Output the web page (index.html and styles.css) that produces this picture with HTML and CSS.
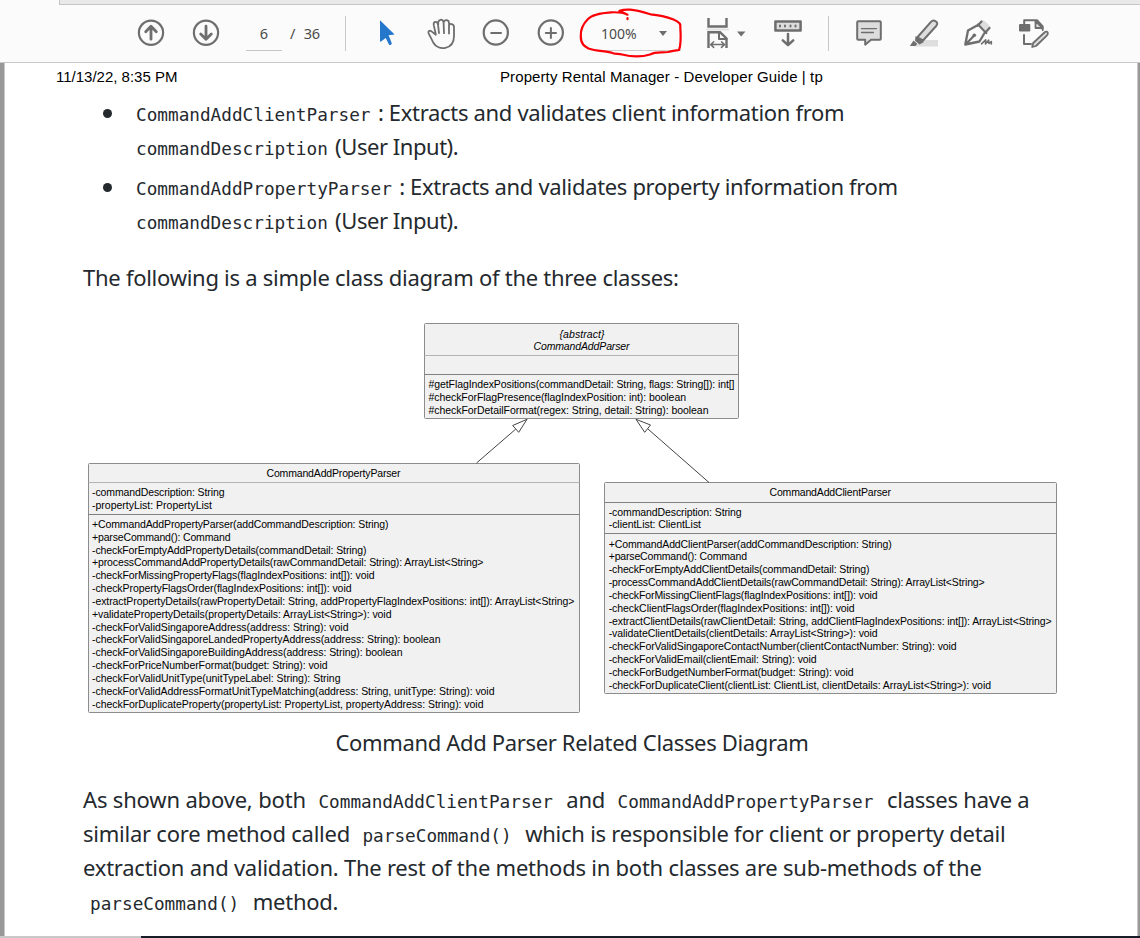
FILE: index.html
```html
<!DOCTYPE html>
<html lang="en">
<head>
<meta charset="utf-8">
<title>Property Rental Manager - Developer Guide</title>
<link rel="stylesheet" href="styles.css">
</head>
<body>
<header class="toolbar">
  <div class="tabstrip"></div>
  <div class="tools">
    <div class="tool w54"><svg class="icon" viewBox="131 13 40 40"><circle cx="151" cy="32.7" r="12.1"/><path d="M151 39.2V26.5M145.7 31.7l5.3-5.4 5.3 5.4" stroke-width="2.8"/></svg></div>
    <div class="tool w56"><svg class="icon" viewBox="186 13 40 40"><circle cx="206" cy="32.7" r="12.1"/><path d="M206 26.2v12.7M200.7 33.9l5.3 5.4 5.3-5.4" stroke-width="2.8"/></svg></div>
    <div class="page-input">6</div>
    <div class="page-total"><span>/</span><span>36</span></div>
    <div class="sep"></div>
    <div class="tool w54 after-sep"><svg class="icon" viewBox="367 13 40 40"><path class="cursor" d="M380 20.2L394.6 34.5L388.6 35.2L391.8 43.2Q391.5 45.3 389.2 45L385.7 38L381 41.5Q380 42 380 41Z"/></svg></div>
    <div class="tool w54"><svg class="icon" viewBox="421 13 40 40"><path d="M435.8 34.2L433.8 25.4C433 21.3 437 20.6 438 24.4L439 33.2M438.3 24.6C437.4 18.6 443.2 18.4 443.6 22.5L444 33.2M443.7 22.5C443.8 19.2 449 19.5 449 23V33.5M449 25.5C449.4 22.8 454 23.8 454 27V36C454 50 438 51.500 433.2 42.500C431.400 38.500 430 36 428.700 33.600C427.500 31.300 429.800 30 431.500 31.400L435.800 34.800" stroke-width="1.8"/></svg></div>
    <div class="tool w56"><svg class="icon" viewBox="476 13 40 40"><circle cx="495.8" cy="32.5" r="12.1"/><path d="M491.200 33h9.800" stroke-width="2"/></svg></div>
    <div class="tool w54"><svg class="icon" viewBox="531 13 40 40"><circle cx="550.800" cy="32.500" r="12.100"/><path d="M545.800 33h10.200M550.900 27.900v10.200" stroke-width="2"/></svg></div>
    <div class="zoom-box">
      <span class="zoom-value">100%</span><span class="caret"></span>
      <svg class="mark" viewBox="578 8 110 52"><path d="M627 14.600C623.500 12.500 619 12 611 12.300C601 13 592 14.500 588 19C582 25 580.500 30 580.800 36C580.600 44 584.500 46.500 588.500 48.500C596 51 604 51 611.500 52.600C614 54.500 618 53.500 622 54.500C634 57.500 642 57 650 54.500C656 51.500 661 53 668 52C674 50.500 677 50.500 679 50C681 45 681 37 680.300 27C681 24.500 679.500 22 673.500 19.500C666 16.500 660 15 650.500 14.300C644 12.200 638 10 630 9.600C625 9.300 622 10 619.500 10.800L627.500 14.700M627.500 18.200v1"/></svg>
    </div>
    <div class="tool w72"><svg class="icon wide" viewBox="704 13 48 40"><path d="M708.500 18V26.500H726.500V18" class="sharp" stroke-width="2.400"/><path d="M707 29.500h21" stroke="#e2e2e2" stroke-width="2"/><path d="M708.500 48V32.200H720L726.500 38.500V48" class="sharp" stroke-width="2.400"/><path d="M719 32.500v6.500h7.500" stroke-width="2"/><path d="M711 44.600h13.500M713.700 41.800l-3 2.800 3 2.800M721.500 41.800l3 2.800-3 2.800" stroke-width="1.500"/><path class="solid" d="M737 31.500h8.400l-4.200 5z"/></svg></div>
    <div class="tool w56"><svg class="icon" viewBox="768 13 40 40"><rect x="775.400" y="21.400" width="25.200" height="9.200" fill="#ddd" stroke-width="2.500"/><path d="M780 25.500v1M785 25.500v1M790.500 25.500v1M795.500 25.500v1" stroke-width="2"/><path d="M788 34v10M782.800 40.300l5.200 4.900 5.200-4.900" stroke-width="2.500"/></svg></div>
    <div class="sep second"></div>
    <div class="tool w54 near-sep"><svg class="icon" viewBox="848 13 40 40"><path d="M858.200 21.300H879.800Q880.800 21.300 880.800 22.300V38.700Q880.800 39.700 879.800 39.700H871L865.200 44.700V39.700H858.200Q857.200 39.700 857.200 38.700V22.300Q857.200 21.300 858.200 21.300Z" fill="#ddd" stroke-width="2"/><path d="M861.500 28.600h15M861.500 32.500h12" stroke-width="1.300"/></svg></div>
    <div class="tool w58"><svg class="icon" viewBox="904 13 40 40"><path d="M914 46.500L923 40H938V46.500Z" fill="#dedede" stroke="none"/><path d="M917.200 37.500L930.700 22.200Q933 19.500 935.700 21.300Q938.500 23.300 936.200 26L923 40.500Z" fill="#ddd" stroke-width="2"/><path class="solid" d="M915.500 36L924 42L919.500 44.500L915 40.800Z"/><path class="solid" d="M913.500 40.500L917.300 43.800L915.500 46H909.800Z"/></svg></div>
    <div class="tool w52"><svg class="icon" viewBox="959 13 40 40"><path d="M979.500 24.500L983.500 20L990.500 26.500L985.500 30Z" fill="#ddd" stroke="none"/><path d="M978 24.500L986.300 33M977 25.500L968 30.500L965.300 44.500L979.500 41.500L984.800 32.500M966 44L973.500 36.200M981.500 21.500L977.500 25.700M989.500 28L985.300 32.500" stroke-width="2.300"/><circle class="solid" cx="974.300" cy="35.300" r="1.800"/><path d="M981.500 43.800L985.700 39.800L985.500 44L988.600 40.200L989 43.500L991.300 41.500V44" stroke-width="1.600"/></svg></div>
    <div class="tool w58"><svg class="icon" viewBox="1014 13 40 40"><path d="M1024.200 24V20.300H1037L1042.700 26.500V30M1024 35V43.900H1031" stroke-width="2"/><path d="M1035.500 21v7h7z" fill="#ddd" stroke-width="1.800"/><rect class="solid" x="1019" y="24" width="11.300" height="7.500" rx="1"/><path d="M1033.200 43L1045 32Q1047 31 1047.800 32.700Q1048.300 34 1046.500 35.800L1036 46L1032.200 47Z" fill="#ddd" stroke-width="1.800"/></svg></div>
  </div>
</header>
<main class="viewer">
  <article class="sheet">
    <div class="running-head"><span class="stamp">11/13/22, 8:35 PM</span><span class="doc-title">Property Rental Manager - Developer Guide | tp</span></div>
    <ul class="list">
      <li><span class="line"><code>CommandAddClientParser</code><span class="after-code"> : Extracts and validates client information from</span></span><span class="line"><code>commandDescription</code><span class="after-code ui"> (User Input).</span></span></li>
      <li><span class="line"><code>CommandAddPropertyParser</code><span class="after-code long"> : Extracts and validates property information from</span></span><span class="line"><code>commandDescription</code><span class="after-code ui"> (User Input).</span></span></li>
    </ul>
    <p class="lead">The following is a simple class diagram of the three classes:</p>
    <svg class="diagram" viewBox="83 318 980 400">
      <g class="box"><rect x="424.500" y="323.500" width="314" height="95" rx="1"/><path class="pale" d="M424.500 355.500h314"/><path d="M424.500 374.500h314"/></g>
      <g class="box"><rect x="88.500" y="463.500" width="491" height="249" rx="1"/><path class="pale" d="M88.500 482.500h491"/><path d="M88.500 514.500h491"/></g>
      <g class="box"><rect x="604.500" y="482.500" width="452" height="211" rx="1"/><path d="M604.500 502.500h452M604.500 533.500h452"/></g>
      <g class="arrow"><path d="M476.500 463L515.500 429.300M709 482.500L647.600 428.700"/><path d="M527 419.300L512.700 425.500L518.700 432.300Z"/><path d="M636 419.300L650.500 425L644.700 432.300Z"/></g>
      <g class="italic">
        <text x="559.500" y="337.500" textLength="45">{abstract}</text>
        <text x="533.500" y="350" textLength="96">CommandAddParser</text>
      </g>
      <text x="428.500" y="388" textLength="306">#getFlagIndexPositions(commandDetail: String, flags: String[]): int[]</text>
      <text x="428.500" y="401" textLength="257.500">#checkForFlagPresence(flagIndexPosition: int): boolean</text>
      <text x="428.500" y="414" textLength="280">#checkForDetailFormat(regex: String, detail: String): boolean</text>

      <text x="266.500" y="477.300" textLength="134">CommandAddPropertyParser</text>
      <text x="92" y="496.300" textLength="132.500">-commandDescription: String</text>
      <text x="92" y="509.200" textLength="120">-propertyList: PropertyList</text>
      <text x="92" y="527.800" textLength="296.500">+CommandAddPropertyParser(addCommandDescription: String)</text>
      <text x="92" y="540.700" textLength="138.500">+parseCommand(): Command</text>
      <text x="92" y="553.500" textLength="274.500">-checkForEmptyAddPropertyDetails(commandDetail: String)</text>
      <text x="92" y="566.300" textLength="391.500">+processCommandAddPropertyDetails(rawCommandDetail: String): ArrayList&lt;String&gt;</text>
      <text x="92" y="579.200" textLength="282.500">-checkForMissingPropertyFlags(flagIndexPositions: int[]): void</text>
      <text x="92" y="592" textLength="259.500">-checkPropertyFlagsOrder(flagIndexPositions: int[]): void</text>
      <text x="92" y="604.900" textLength="482.500">-extractPropertyDetails(rawPropertyDetail: String, addPropertyFlagIndexPositions: int[]): ArrayList&lt;String&gt;</text>
      <text x="92" y="617.700" textLength="299.500">+validatePropertyDetails(propertyDetails: ArrayList&lt;String&gt;): void</text>
      <text x="92" y="630.500" textLength="256.500">-checkForValidSingaporeAddress(address: String): void</text>
      <text x="92" y="643.400" textLength="348.500">-checkForValidSingaporeLandedPropertyAddress(address: String): boolean</text>
      <text x="92" y="656.200" textLength="310.500">-checkForValidSingaporeBuildingAddress(address: String): boolean</text>
      <text x="92" y="669.100" textLength="235.500">-checkForPriceNumberFormat(budget: String): void</text>
      <text x="92" y="681.900" textLength="248.500">-checkForValidUnitType(unitTypeLabel: String): String</text>
      <text x="92" y="694.700" textLength="402.500">-checkForValidAddressFormatUnitTypeMatching(address: String, unitType: String): void</text>
      <text x="92" y="707.600" textLength="391.500">-checkForDuplicateProperty(propertyList: PropertyList, propertyAddress: String): void</text>

      <text x="769.500" y="496.300" textLength="121.500">CommandAddClientParser</text>
      <text x="608.700" y="515.800" textLength="133">-commandDescription: String</text>
      <text x="608.700" y="528.300" textLength="92.300">-clientList: ClientList</text>
      <text x="608.700" y="547.500" textLength="283">+CommandAddClientParser(addCommandDescription: String)</text>
      <text x="608.700" y="560.300" textLength="138.300">+parseCommand(): Command</text>
      <text x="608.700" y="573.200" textLength="260.800">-checkForEmptyAddClientDetails(commandDetail: String)</text>
      <text x="608.700" y="586" textLength="376">-processCommandAddClientDetails(rawCommandDetail: String): ArrayList&lt;String&gt;</text>
      <text x="608.700" y="598.800" textLength="269">-checkForMissingClientFlags(flagIndexPositions: int[]): void</text>
      <text x="608.700" y="611.700" textLength="246">-checkClientFlagsOrder(flagIndexPositions: int[]): void</text>
      <text x="608.700" y="624.500" textLength="443">-extractClientDetails(rawClientDetail: String, addClientFlagIndexPositions: int[]): ArrayList&lt;String&gt;</text>
      <text x="608.700" y="637.400" textLength="269">-validateClientDetails(clientDetails: ArrayList&lt;String&gt;): void</text>
      <text x="608.700" y="650.200" textLength="348">-checkForValidSingaporeContactNumber(clientContactNumber: String): void</text>
      <text x="608.700" y="663" textLength="208">-checkForValidEmail(clientEmail: String): void</text>
      <text x="608.700" y="675.900" textLength="245">-checkForBudgetNumberFormat(budget: String): void</text>
      <text x="608.700" y="688.700" textLength="382.300">-checkForDuplicateClient(clientList: ClientList, clientDetails: ArrayList&lt;String&gt;): void</text>
    </svg>
    <p class="caption">Command Add Parser Related Classes Diagram</p>
    <p class="body-text"><span class="line"><span class="opening">As shown above, both </span><code class="pad">CommandAddClientParser</code> and <code class="pad">CommandAddPropertyParser</code> classes have a</span><span class="line">similar core method called <code class="pad">parseCommand()</code> which is responsible for client or property detail</span><span class="line">extraction and validation. The rest of the methods in both classes are sub-methods of the</span><span class="line"><code class="pad">parseCommand()</code> method.</span></p>
  </article>
</main>
<footer class="taskbar"></footer>
</body>
</html>
```

FILE: styles.css
```css
* { box-sizing: border-box; }
body { margin: 0; height: 938px; overflow: hidden; display: flex; flex-direction: column; background: #fff; color: #24292e; font-family: "Noto Sans", "Open Sans", sans-serif; }

.toolbar { height: 63px; flex: none; background: #fbfbfb; border-bottom: 1px solid #c8c8c8; }
.tabstrip { height: 5px; margin-left: 59px; background: #e9e9e9; border-left: 1px solid #c6c6c6; border-bottom: 1px solid #c6c6c6; }
.tools { display: flex; height: 40px; margin-top: 8px; padding-left: 124px; font-size: 14.5px; color: #4b4b4b; }
.tool { display: flex; justify-content: center; flex: none; }
.w52 { width: 52px; }
.w54 { width: 54px; }
.w56 { width: 56px; }
.w58 { width: 58px; }
.w72 { width: 72px; }
.icon { width: 40px; height: 40px; fill: none; stroke: #6e6e6e; stroke-width: 2.2; stroke-linecap: round; stroke-linejoin: round; }
.icon.wide { width: 48px; flex: none; margin-left: 8px; }
.icon .sharp { stroke-linecap: butt; stroke-linejoin: miter; }
.icon .solid { fill: #6e6e6e; stroke: none; }
.icon .cursor { fill: #2477cb; stroke: none; }
.page-input { width: 36px; height: 38px; margin-left: 12px; border-bottom: 1px solid #c6c6c6; text-align: center; line-height: 41px; }
.page-total { width: 47px; flex: none; margin-left: 8px; display: flex; gap: 8.5px; line-height: 41px; letter-spacing: -0.2px; }
.sep { width: 1px; height: 35px; margin-top: 3px; margin-left: 8px; background: #c8c8c8; flex: none; }
.after-sep { margin-left: 14px; }
.sep.second { margin-left: 12px; }
.near-sep { margin-left: 12px; }
.zoom-box { position: relative; width: 110px; flex: none; display: flex; align-items: flex-start; padding-left: 23px; line-height: 41px; font-size: 14px; }
.zoom-value { width: 58px; height: 38px; flex: none; border-bottom: 1px solid #ccc; }
.caret { width: 22px; height: 38px; border-bottom: 1px solid #ccc; }
.caret::before { content: ""; display: block; margin-top: 18px; width: 0; border: 4.5px solid transparent; border-top: 5px solid #6e6e6e; border-bottom: 0; }
.mark { position: absolute; left: 0; top: -5px; width: 110px; height: 52px; fill: none; stroke: #fb0007; stroke-width: 2.2; stroke-linecap: round; stroke-linejoin: round; }

.viewer { flex: 1; min-height: 0; overflow: hidden; background: #999; padding-left: 4px; padding-right: 2px; }
.sheet { height: 100%; background: #fff; border-left: 1px solid #c8c8c8; border-right: 1px solid #c8c8c8; padding-left: 78px; }
.running-head { display: flex; margin-left: -27px; height: 32px; padding-top: 5px; font: 15px/18px "Liberation Sans", sans-serif; color: #000; }
.stamp { width: 444px; }
.doc-title { white-space: nowrap; letter-spacing: 0.1px; }
.list { list-style: none; margin: 0; padding: 0; }
.list li { position: relative; padding-left: 53px; margin-bottom: 6px; }
.list li::before { content: ""; position: absolute; left: 20px; top: 14px; width: 9px; height: 9px; border-radius: 50%; background: #24292e; }
.line { display: block; height: 34px; }
.line, .lead, .caption { font-size: 22px; line-height: 34px; white-space: pre; letter-spacing: -0.3px; }
.after-code { margin-left: 2px; letter-spacing: -0.32px; }
.after-code.long { letter-spacing: -0.34px; }
.after-code.ui { letter-spacing: -0.46px; }
code { font: 17.72px/20px "DejaVu Sans Mono", "Liberation Mono", monospace; letter-spacing: 0; }
.pad { padding: 0 8px 0 7px; }
.lead { margin: 23px 0 24px; letter-spacing: -0.27px; }
.diagram { display: block; width: 980px; height: 400px; font-family: "Liberation Sans", sans-serif; font-size: 10.5px; fill: #000; }
.diagram .italic { font-style: italic; }
.box rect { fill: #f1f1f1; stroke: #8c8c8c; }
.box path { stroke: #808080; fill: none; }
.box .pale { stroke: #b4b4b4; }
.arrow path { fill: #fff; stroke: #444; stroke-width: 1; }
.caption { margin: 7px 0 23px; width: 978px; text-align: center; letter-spacing: -0.34px; }
.body-text { margin: 0; }
.body-text .line { letter-spacing: -0.24px; }
.opening { letter-spacing: -0.17px; }
.body-text code { letter-spacing: 0; }
.taskbar { height: 2px; flex: none; background: linear-gradient(90deg, #c8c8c8 141px, #171c28 141px); }
```
